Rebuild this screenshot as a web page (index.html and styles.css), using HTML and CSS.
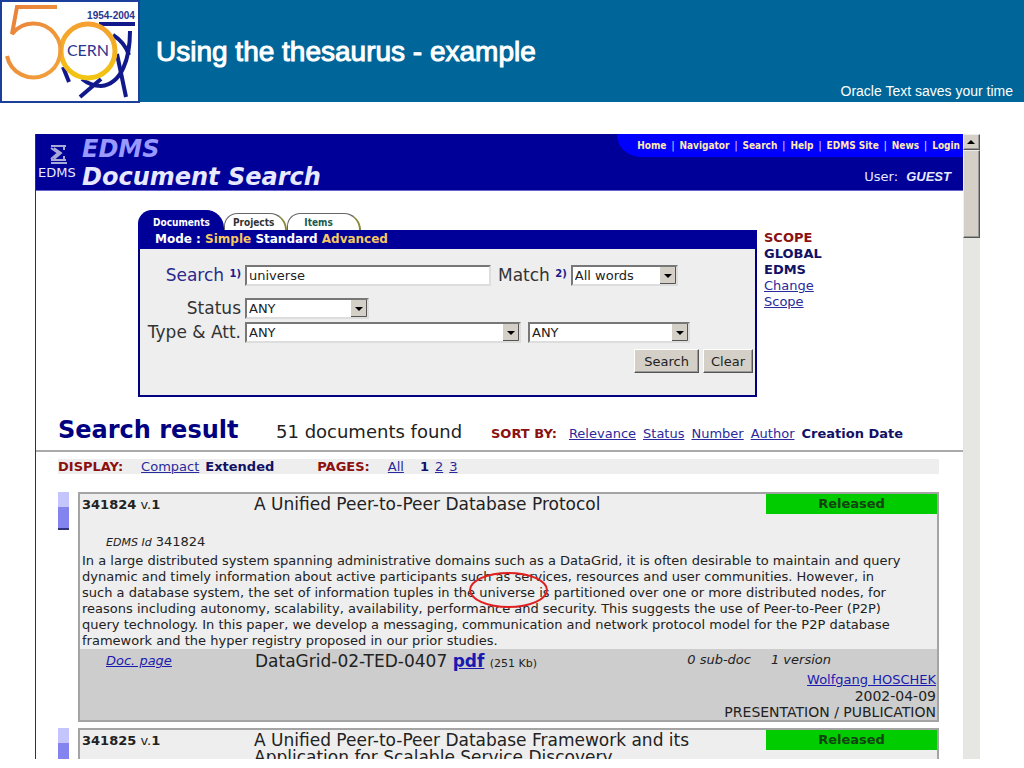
FILE: index.html
```html
<!DOCTYPE html>
<html lang="en">
<head>
    <meta charset="UTF-8">
    <meta name="viewport" content="width=device-width, initial-scale=1.0">
    <title>Using the thesaurus - example</title>
    <link rel="stylesheet" href="styles.css">
</head>
<body>
    <header class="slide-header">
        <svg class="cern-logo" viewBox="0 0 140 103" role="img" aria-label="CERN 50 years, 1954-2004">
            <defs>
                <linearGradient id="five" x1="0" y1="0" x2="1" y2="1">
                    <stop offset="0" stop-color="#e87f3c"/>
                    <stop offset="1" stop-color="#f3a43a"/>
                </linearGradient>
                <linearGradient id="zero" x1="0" y1="0" x2="0" y2="1">
                    <stop offset="0" stop-color="#f5a030"/>
                    <stop offset="1" stop-color="#f2c512"/>
                </linearGradient>
            </defs>
            <rect x="1" y="1" width="138" height="101" fill="#fff" stroke="#1c3f9c" stroke-width="2"/>
            <g fill="none" stroke="#10188c" stroke-width="4">
                <path d="M99 24H135"/>
                <path d="M113 35C121 40 126 46 129 55"/>
                <path d="M130 31C130 58 122 84 101 86C93 86 87 83 82 79"/>
                <path d="M63 67L69 82"/>
                <path d="M80 97L101 79"/>
                <path d="M117 54L126 97"/>
            </g>
            <circle cx="88" cy="51" r="27" fill="#fff" stroke="url(#zero)" stroke-width="5"/>
            <path d="M57 7H17L12 34A27 27 0 1 1 7 56" fill="none" stroke="url(#five)" stroke-width="4"/>
            <text class="logo-name" x="88" y="56" text-anchor="middle">CERN</text>
            <text class="logo-years" x="111" y="19" text-anchor="middle">1954-2004</text>
        </svg>
        <h1>Using the thesaurus - example</h1>
        <p class="tagline">Oracle Text saves your time</p>
    </header>

    <div class="browser">
        <main class="page">
            <div class="app-header">
                <div class="app-logo">
                    <svg width="18" height="20" viewBox="0 0 18 20" aria-hidden="true">
                        <path d="M1 1H16M1 3L8 8L1 14M4 3L11 8L4 14M1 15H16M14 1V5M14 11V15" fill="none" stroke="#a8a8d8" stroke-width="2"/>
                        <path d="M1 18H17" fill="none" stroke="#a8a8d8" stroke-width="2"/>
                    </svg>
                    <span>EDMS</span>
                </div>
                <div class="app-title">
                    <div class="app-name">EDMS</div>
                    <h2>Document Search</h2>
                </div>
                <div class="app-side">
                    <nav class="top-nav">
                        <a href="#">Home</a><span>|</span>
                        <a href="#">Navigator</a><span>|</span>
                        <a href="#">Search</a><span>|</span>
                        <a href="#">Help</a><span>|</span>
                        <a href="#">EDMS Site</a><span>|</span>
                        <a href="#">News</a><span>|</span>
                        <a href="#">Login</a>
                    </nav>
                    <div class="user">User: <b>GUEST</b></div>
                </div>
            </div>

            <div class="search-area">
                <div class="search-panel">
                    <div class="tabs">
                        <a class="tab active" href="#">Documents</a>
                        <a class="tab" href="#">Projects</a>
                        <a class="tab items" href="#">Items</a>
                    </div>
                    <div class="mode-bar">
                        Mode : <a href="#">Simple</a> <b>Standard</b> <a href="#">Advanced</a>
                    </div>
                    <form class="search-form">
                        <div class="form-row first">
                            <label class="main-label" for="query">Search <sup>1)</sup></label>
                            <input class="field query" id="query" type="text" value="universe">
                            <label for="match">Match <sup>2)</sup></label>
                            <select class="field match" id="match"><option>All words</option></select>
                        </div>
                        <div class="form-row">
                            <label class="main-label" for="status">Status</label>
                            <select class="field status" id="status"><option>ANY</option></select>
                        </div>
                        <div class="form-row">
                            <label class="main-label" for="type">Type &amp; Att.</label>
                            <select class="field type" id="type"><option>ANY</option></select>
                            <select class="field att" id="att" aria-label="Attribute"><option>ANY</option></select>
                        </div>
                        <div class="form-buttons">
                            <button class="submit" type="submit">Search</button>
                            <button type="reset">Clear</button>
                        </div>
                    </form>
                </div>
                <div class="scope">
                    <b class="caption">SCOPE</b>
                    <b>GLOBAL</b>
                    <b>EDMS</b>
                    <a href="#">Change Scope</a>
                </div>
            </div>

            <div class="result-header">
                <h2>Search result</h2>
                <span class="found">51 documents found</span>
                <div class="sort">
                    <b class="caption">SORT BY:</b>
                    <a href="#">Relevance</a>
                    <a href="#">Status</a>
                    <a href="#">Number</a>
                    <a href="#">Author</a>
                    <b>Creation Date</b>
                </div>
            </div>

            <div class="display-bar">
                <div class="display-group">
                    <b class="caption">DISPLAY:</b>
                    <a href="#">Compact</a>
                    <b>Extended</b>
                </div>
                <div class="display-group">
                    <b class="caption">PAGES:</b>
                    <a class="all" href="#">All</a>
                    <b>1</b>
                    <a href="#">2</a>
                    <a href="#">3</a>
                </div>
            </div>

            <div class="result">
                <div class="marker"></div>
                <article class="card">
                    <div class="card-head">
                        <div class="doc-id"><b>341824</b> v.<b>1</b></div>
                        <h3>A Unified Peer-to-Peer Database Protocol</h3>
                        <div class="released">Released</div>
                    </div>
                    <div class="edms-id"><i>EDMS Id</i> 341824</div>
                    <p class="abstract">
                        In a large distributed system spanning administrative domains such as a DataGrid, it is often desirable to maintain and query<br>
                        dynamic and timely information about active participants such as services, resources and user communities. However, in<br>
                        such a database system, the set of information tuples in the <span class="circled">universe</span> is partitioned over one or more distributed nodes, for<br>
                        reasons including autonomy, scalability, availability, performance and security. This suggests the use of Peer-to-Peer (P2P)<br>
                        query technology. In this paper, we develop a messaging, communication and network protocol model for the P2P database<br>
                        framework and the hyper registry proposed in our prior studies.
                    </p>
                    <div class="card-foot">
                        <a class="doc-page" href="#">Doc. page</a>
                        <div class="file">DataGrid-02-TED-0407 <a href="#">pdf</a> <small>(251 Kb)</small></div>
                        <div class="info">
                            <div class="counts"><span>0 sub-doc</span><span>1 version</span></div>
                            <a href="#">Wolfgang HOSCHEK</a>
                            <div class="meta">2002-04-09</div>
                            <div class="meta">PRESENTATION / PUBLICATION</div>
                        </div>
                    </div>
                </article>
            </div>

            <div class="result">
                <div class="marker"></div>
                <article class="card">
                    <div class="card-head">
                        <div class="doc-id"><b>341825</b> v.<b>1</b></div>
                        <h3>A Unified Peer-to-Peer Database Framework and its Application for Scalable Service Discovery</h3>
                        <div class="released">Released</div>
                    </div>
                </article>
            </div>
        </main>
        <div class="scrollbar">
            <button class="scroll-up" type="button" aria-label="Scroll up"></button>
            <div class="scroll-thumb"></div>
        </div>
    </div>
</body>
</html>
```

FILE: styles.css
```css
*, *::before, *::after {
    box-sizing: border-box;
}
body {
    margin: 0;
    height: 100vh;
    display: flex;
    flex-direction: column;
    overflow: hidden;
    background: #fff;
    color: #222;
    font-family: "DejaVu Sans", Verdana, sans-serif;
    font-size: 13px;
    line-height: 16px;
}
h1, h2, h3, p {
    margin: 0;
}
a {
    color: #2a2a9c;
}
.caption {
    color: #8b1010;
}

/* slide title */
.slide-header {
    display: flex;
    flex: none;
    height: 102px;
    background: #006699;
    color: #fff;
    font-family: "Liberation Sans", Arial, sans-serif;
}
.cern-logo {
    flex: none;
    width: 140px;
    height: 103px;
}
.logo-name {
    font: 16px Lato, sans-serif;
    fill: #2a358f;
}
.logo-years {
    font: bold 10px "Liberation Sans", sans-serif;
    fill: #2a358f;
}
.slide-header h1 {
    flex: 1;
    padding: 36px 0 0 16px;
    font-size: 28px;
    line-height: 32px;
    font-weight: normal;
    -webkit-text-stroke: 1px #fff;
}
.tagline {
    align-self: flex-end;
    padding: 0 11px 3px 0;
    font-size: 14px;
}

/* browser window */
.browser {
    flex: 1;
    min-height: 0;
    display: flex;
    margin: 32px 44px 9px 35px;
    overflow: hidden;
}
.page {
    flex: 1;
    min-width: 0;
    border-left: 1px solid #333;
    overflow: hidden;
}
.scrollbar {
    flex: none;
    width: 17px;
    background: #e6e6e2;
}
.scroll-up, .scroll-thumb {
    display: block;
    width: 17px;
    background: #d4d0c8;
    border: 1px solid;
    border-color: #eee #555 #555 #eee;
    box-shadow: inset -1px -1px #999;
}
.scroll-up {
    height: 16px;
    padding: 0 3px;
}
.scroll-up::before {
    content: "";
    display: block;
    width: 8px;
    border: 4px solid transparent;
    border-top: 0;
    border-bottom-color: #000;
}
.scroll-thumb {
    height: 88px;
}

/* application header */
.app-header {
    display: flex;
    height: 57px;
    background: #000099;
    border-bottom: 1px solid #6666cc;
    color: #e8e8ff;
}
.app-logo {
    width: 46px;
    padding: 11px 0 0 2px;
}
.app-logo svg {
    display: block;
    margin-left: 12px;
}
.app-title {
    flex: 1;
    padding-top: 1px;
    font-size: 24px;
    font-weight: bold;
    font-style: italic;
}
.app-name {
    line-height: 28px;
    color: #9999ff;
}
.app-title h2 {
    font-size: 24px;
    line-height: 28px;
    white-space: nowrap;
}
.top-nav {
    display: flex;
    gap: 5px;
    height: 23px;
    padding: 4px 3px 0 20px;
    background: #0000ff;
    border-bottom-left-radius: 24px 22px;
    font-family: "DejaVu Sans Condensed", "DejaVu Sans", sans-serif;
    font-size: 10px;
    line-height: 15px;
    white-space: nowrap;
}
.top-nav a {
    color: #ffe8b0;
    font-weight: bold;
    text-decoration: none;
}
.user {
    padding: 12px 12px 0 0;
    text-align: right;
}
.user b {
    margin-left: 4px;
    font-style: italic;
    font-family: "Liberation Sans", Arial, sans-serif;
}

/* search form */
.search-area {
    display: flex;
    gap: 7px;
    padding: 19px 0 0 102px;
}
.search-panel {
    flex: none;
    width: 619px;
}
.tabs {
    display: flex;
    height: 20px;
    align-items: flex-end;
}
.tab {
    height: 17px;
    padding: 2px 11px 0 8px;
    border: 1px solid #666;
    border-right: 2px solid #88883a;
    border-bottom: 0;
    border-radius: 14px 18px 0 0;
    background: #fff;
    color: #333;
    font-family: "DejaVu Sans Condensed", "DejaVu Sans", sans-serif;
    font-size: 10px;
    font-weight: bold;
    line-height: 14px;
    text-decoration: none;
}
.tab.active {
    height: 20px;
    padding: 5px 12px 0 14px;
    border-color: #000099;
    background: #000099;
    color: #fff;
}
.tab.items {
    padding: 2px 26px 0 16px;
    color: #1a5a50;
}
.mode-bar {
    height: 19px;
    padding-left: 17px;
    background: #000099;
    color: #fff;
    font-size: 12px;
    font-weight: bold;
    line-height: 18px;
}
.mode-bar a {
    color: #f5c860;
    text-decoration: none;
}
.search-form {
    height: 148px;
    padding: 14px 2px 0 0;
    border: 2px solid #000080;
    border-top: 0;
    background: #eee;
}
.form-row {
    display: flex;
    align-items: center;
    gap: 4px;
    height: 24px;
    color: #333;
}
.form-row.first {
    margin-bottom: 9px;
}
.form-row label {
    font-size: 17px;
    white-space: nowrap;
}
.form-row .main-label {
    flex: none;
    width: 101px;
    text-align: right;
}
.first .main-label {
    color: #2a2a8c;
}
.form-row sup {
    color: #1a1a8c;
    font-size: 10px;
    font-weight: bold;
    line-height: 0;
    vertical-align: 4px;
}
.field {
    height: 21px;
    padding: 0 2px;
    border: 2px solid;
    border-color: #777 #ddd #ddd #777;
    border-radius: 0;
    background-color: #fff;
    color: #222;
    font-family: inherit;
    font-size: 13px;
}
select.field {
    appearance: none;
    background-image: url("data:image/svg+xml,%3Csvg xmlns='http://www.w3.org/2000/svg' width='16' height='17'%3E%3Crect width='16' height='17' fill='%23d4d0c8'/%3E%3Cpath d='M0 16.5H15.5V0' fill='none' stroke='%23555'/%3E%3Cpath d='M4 7H12L8 11Z'/%3E%3C/svg%3E");
    background-repeat: no-repeat;
    background-position: right center;
}
.query {
    width: 246px;
    margin-right: 3px;
}
.match {
    width: 107px;
}
.status {
    width: 124px;
}
.type {
    width: 276px;
    margin-right: 3px;
}
.att {
    width: 162px;
}
.form-buttons {
    display: flex;
    justify-content: flex-end;
    gap: 4px;
    margin-top: 5px;
}
.form-buttons button {
    height: 24px;
    padding: 0 7px;
    border: 1px solid;
    border-color: #fff #555 #555 #fff;
    box-shadow: inset -1px -1px #999;
    background: #d4d0c8;
    color: #222;
    font-family: inherit;
    font-size: 13px;
}
.form-buttons .submit {
    padding: 0 9px;
}
.scope {
    width: 64px;
    padding-top: 20px;
    color: #111166;
}
.scope b {
    display: block;
}

/* result list */
.result-header {
    display: flex;
    align-items: baseline;
    height: 55px;
    padding: 17px 0 0 22px;
    border-bottom: 2px solid #aaa;
    white-space: nowrap;
}
.result-header h2 {
    width: 218px;
    color: #000080;
    font-size: 24px;
    line-height: 32px;
}
.found {
    width: 215px;
    font-size: 18px;
}
.sort {
    display: flex;
    gap: 7px;
    color: #111166;
}
.sort .caption {
    margin-right: 5px;
}
.display-bar {
    display: flex;
    gap: 43px;
    height: 15px;
    margin: 7px 24px 18px 22px;
    background: #eee;
    color: #111166;
}
.display-group {
    display: flex;
    gap: 6px;
}
.display-group .caption {
    margin-right: 12px;
}
.all {
    margin-right: 10px;
}
.result {
    display: flex;
    gap: 9px;
    margin: 0 24px 6px 22px;
}
.marker {
    flex: none;
    width: 11px;
    height: 38px;
    border-top: 15px solid #c4c4ff;
    border-bottom: 2px solid #333377;
    background: #8484ee;
}
.card {
    flex: 1;
    min-width: 0;
    border: 2px solid #a4a4a4;
    background: #eee;
}
.card-head {
    display: flex;
    min-height: 40px;
}
.doc-id {
    flex: none;
    width: 174px;
    padding: 3px 0 0 2px;
}
.card-head h3 {
    flex: 1;
    padding: 2px 20px 0 0;
    font-size: 17px;
    font-weight: normal;
    line-height: 17px;
}
.released {
    flex: none;
    width: 171px;
    height: 20px;
    background: #00cc00;
    color: #114411;
    font-weight: bold;
    line-height: 20px;
    text-align: center;
}
.edms-id {
    padding-left: 26px;
}
.edms-id i {
    font-size: 11px;
}
.abstract {
    padding: 2px 0 0 2px;
    white-space: nowrap;
}
.circled {
    position: relative;
}
.circled::after {
    content: "";
    position: absolute;
    top: -13px;
    left: -10px;
    width: 79px;
    height: 36px;
    border: 2px solid #e02020;
    border-radius: 50%;
}
.card-foot {
    display: flex;
    height: 71px;
    padding: 4px 1px 0 26px;
    background: #cdcdcd;
}
.card-foot a {
    color: #1a1ab0;
}
.doc-page {
    width: 149px;
    font-style: italic;
}
.file {
    flex: 1;
    font-size: 17px;
    line-height: 17px;
    white-space: nowrap;
}
.file a {
    font-weight: bold;
}
.file small {
    font-size: 11px;
}
.info {
    text-align: right;
}
.meta {
    font-size: 14px;
}
.counts {
    display: flex;
    justify-content: flex-end;
    gap: 20px;
    height: 19px;
    margin-right: 105px;
    font-style: italic;
    line-height: 14px;
}
```
